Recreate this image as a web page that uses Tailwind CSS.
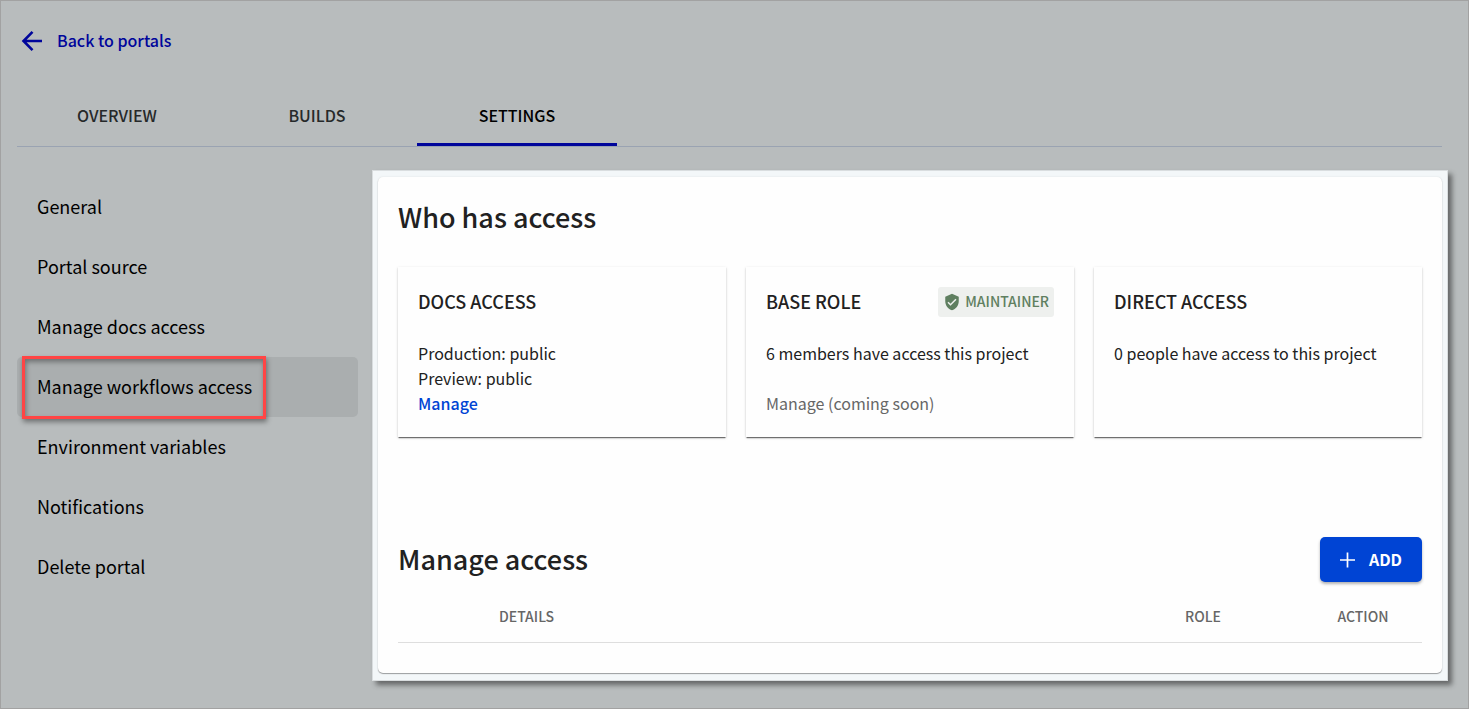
<!DOCTYPE html>
<html lang="en">
<head>
<meta charset="utf-8">
<meta name="viewport" content="width=device-width, initial-scale=1">
<title>Portal settings</title>
<script src="https://cdn.jsdelivr.net/npm/@tailwindcss/browser@4"></script>
</head>
<body class="flex min-h-screen flex-col border border-[#a2a2a2] bg-[#b8bcbd] font-['Noto_Sans_CJK_SC','Noto_Sans_CJK_JP',sans-serif] text-black">
  <header class="pl-4 pr-[26px] pt-6">
    <a href="#" class="flex h-8 w-fit items-center gap-3 pl-1 text-base leading-6 font-medium text-[#00059b]">
      <svg class="size-6" viewBox="0 0 24 24" fill="none" stroke="currentColor" stroke-width="2.600" aria-hidden="true"><path d="M21 12H3M11.500 2.800L2.500 12l9 9.200"/></svg>
      <span class="pb-0.5">Back to portals</span>
    </a>
    <nav aria-label="Portal sections" class="mt-[30px] flex border-b border-[#9aa3b2] text-base leading-6 font-medium text-[#26292a]">
      <a href="#" class="flex h-[59px] w-[200px] items-center justify-center border-b-[3px] border-transparent">OVERVIEW</a>
      <a href="#" class="flex h-[59px] w-[200px] items-center justify-center border-b-[3px] border-transparent">BUILDS</a>
      <a href="#" aria-current="page" class="flex h-[59px] w-[200px] items-center justify-center border-b-[3px] border-[#00059b] text-black">SETTINGS</a>
    </nav>
  </header>

  <div class="flex flex-1 items-start gap-[15px] pl-4 pr-[21px] pt-6 pb-[26px]">
    <nav aria-label="Settings" class="mt-[6px] w-[341px] shrink-0 text-lg leading-6">
      <a href="#" class="flex h-[60px] items-center pb-0.5 pl-5">General</a>
      <a href="#" class="flex h-[60px] items-center pb-0.5 pl-5">Portal source</a>
      <a href="#" class="flex h-[60px] items-center pb-0.5 pl-5">Manage docs access</a>
      <a href="#" aria-current="page" class="relative flex h-[60px] items-center rounded-[5px] bg-[#aaaeaf] pb-0.5 pl-5">
        Manage workflows access
        <span class="absolute -top-px left-[5px] h-[63px] w-[244px] border-[3px] border-[#ff4545] shadow-[1px_3px_5px_rgba(0,0,0,0.4),inset_1px_3px_5px_rgba(0,0,0,0.35)]" aria-hidden="true"></span>
      </a>
      <a href="#" class="flex h-[60px] items-center pb-0.5 pl-5">Environment variables</a>
      <a href="#" class="flex h-[60px] items-center pb-0.5 pl-5">Notifications</a>
      <a href="#" class="flex h-[60px] items-center pb-0.5 pl-5">Delete portal</a>
    </nav>

    <main class="min-w-0 flex-1 bg-[#f3f7f9] px-[5px] pt-[6px] pb-[7px] shadow-[0_0_0_1px_#d9dddf,4px_4px_5px_1px_rgba(0,0,0,0.45)]">
      <div class="rounded-[5px] bg-[#fefefe] px-5 pt-[22px] pb-[30px] text-[#212121] shadow-[0_1px_1px_rgba(0,0,0,0.35),0_0_2px_rgba(0,0,0,0.1)]">
        <section>
          <h2 class="text-[27px] leading-9 font-medium">Who has access</h2>
          <div class="mt-8 grid grid-cols-3 gap-5 text-base leading-[25px]">
            <article class="h-[170px] bg-[#fefefe] p-5 shadow-[0_2px_1px_-1px_rgba(0,0,0,0.4),0_1px_1px_rgba(0,0,0,0.2),0_1px_3px_rgba(0,0,0,0.14)]">
              <h3 class="flex h-[30px] items-center pb-0.5 text-lg font-medium">DOCS ACCESS</h3>
              <p class="mt-6">Production: public</p>
              <p>Preview: public</p>
              <a href="#" class="font-medium text-[#0044d4]">Manage</a>
            </article>
            <article class="h-[170px] bg-[#fefefe] p-5 shadow-[0_2px_1px_-1px_rgba(0,0,0,0.4),0_1px_1px_rgba(0,0,0,0.2),0_1px_3px_rgba(0,0,0,0.14)]">
              <div class="flex h-[30px] items-center justify-between">
                <h3 class="pb-0.5 text-lg font-medium">BASE ROLE</h3>
                <span class="flex h-[30px] items-center gap-1 rounded-[3px] bg-[#eef0ee] px-[5px] text-sm font-medium text-[#5f7f60]">
                  <svg class="size-[18px]" viewBox="0 0 24 24" fill="currentColor" aria-hidden="true"><path d="M12 1L3 5v6c0 5.550 3.840 10.740 9 12 5.160-1.260 9-6.450 9-12V5l-9-4zm-2 16l-4-4 1.410-1.410L10 14.170l6.590-6.590L18 9l-8 8z"/></svg>
                  <span class="pb-0.5">MAINTAINER</span>
                </span>
              </div>
              <p class="mt-6">6 members have access this project</p>
              <p class="mt-[25px] text-[#666]">Manage (coming soon)</p>
            </article>
            <article class="h-[170px] bg-[#fefefe] p-5 shadow-[0_2px_1px_-1px_rgba(0,0,0,0.4),0_1px_1px_rgba(0,0,0,0.2),0_1px_3px_rgba(0,0,0,0.14)]">
              <h3 class="flex h-[30px] items-center pb-0.5 text-lg font-medium">DIRECT ACCESS</h3>
              <p class="mt-6">0 people have access to this project</p>
            </article>
          </div>
        </section>

        <section class="mt-[100px]">
          <div class="flex items-center justify-between">
            <h2 class="pb-0.5 text-[27px] leading-9 font-medium">Manage access</h2>
            <button type="button" class="flex h-[45px] items-center gap-[9px] rounded-[5px] bg-[#0044d4] pr-5 pl-4 text-base leading-6 font-bold text-white shadow-[0_2px_3px_rgba(0,0,0,0.3)]">
              <svg class="size-6" viewBox="0 0 24 24" fill="none" stroke="currentColor" stroke-width="1.700" aria-hidden="true"><path d="M4 12h15M11.500 4.500v15"/></svg>
              <span class="pb-0.5">ADD</span>
            </button>
          </div>
          <table class="mt-[10px] w-full table-fixed border-b border-[#dedede] text-left text-sm leading-5 text-[#666]">
            <thead>
              <tr class="h-[50px]">
                <td class="w-[101px]"></td>
                <th scope="col" class="pb-0.5 font-medium">DETAILS</th>
                <th scope="col" class="w-[178px] pr-6 pb-0.5 text-center font-medium">ROLE</th>
                <th scope="col" class="w-[118px] pb-0.5 text-center font-medium">ACTION</th>
              </tr>
            </thead>
          </table>
        </section>
      </div>
    </main>
  </div>
</body>
</html>
